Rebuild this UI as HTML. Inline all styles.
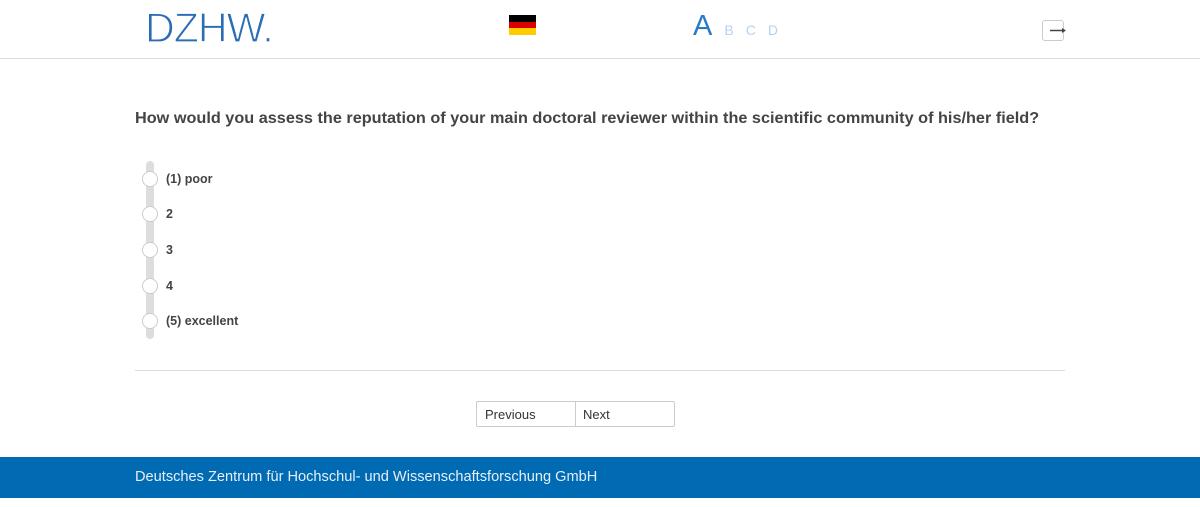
<!DOCTYPE html>
<html><head><meta charset="utf-8"><style>
body{margin:0;width:1200px;height:507px;background:#fff;font-family:"Liberation Sans",sans-serif;position:relative;overflow:hidden}
.hdr{position:absolute;left:0;top:0;width:1200px;height:58px;border-bottom:1px solid #ddd}
.logo{position:absolute;left:145px;top:4px;font-family:"Liberation Sans",sans-serif;font-size:42px;color:#2b6cb5;letter-spacing:-1px;-webkit-text-stroke:1.2px #fff;transform:scaleX(0.98);transform-origin:left}
.flag{position:absolute;left:509px;top:15px;width:27px;height:20px}
.flag div{height:33.4%}
.abc{position:absolute;left:693px;top:10px;color:#2a7bc6;font-family:"Liberation Sans",sans-serif}
.abc .a{font-size:29px}
.abc .o{font-size:14px;color:#b6d3ee;margin-left:12px}
.exit{position:absolute;left:1042px;top:20px;width:20px;height:19px;border:1px solid #ccc;border-radius:3px}
.q{position:absolute;left:135px;top:110px;font-size:16px;font-weight:bold;color:#444;white-space:nowrap;transform:scaleX(1.016);transform-origin:left}
.track{position:absolute;left:146px;top:161px;width:8px;height:178px;background:#ddd;border-radius:4px}
.opt{position:absolute;left:142px;height:16px}
.opt .c{position:absolute;left:0;top:0;width:14px;height:14px;border:1px solid #ccc;border-radius:50%;background:#fff}
.opt span{position:absolute;left:24px;top:1px;font-size:12.5px;font-weight:bold;color:#444;white-space:nowrap}
.hr{position:absolute;left:135px;top:370px;width:930px;border-top:1px solid #ddd}
.btns{position:absolute;left:476px;top:401px;width:197px;height:24px;border:1px solid #ccc;border-radius:2px;font-size:13px;color:#333}
.btns div{position:absolute;top:5px}
.ftr{position:absolute;left:0;top:457px;width:1200px;height:41px;background:#006ab3;color:#e6eff8;font-size:14.6px}
.ftr span{position:absolute;left:135px;top:12px}
</style></head><body>
<div class="hdr">
<div class="logo">DZHW.</div>
<div class="flag"><div style="background:#000"></div><div style="background:#d00"></div><div style="background:#fc0"></div></div>
<div class="abc"><span class="a">A</span><span class="o">B</span><span class="o">C</span><span class="o">D</span></div>
<div class="exit"><svg width="26" height="19" style="position:absolute;left:0;top:0;overflow:visible"><path d="M7 9.5H20" stroke="#444" stroke-width="1.5"/><path d="M19 7L23 9.5L19 12Z" fill="#444"/></svg></div>
</div>
<div class="q">How would you assess the reputation of your main doctoral reviewer within the scientific community of his/her field?</div>
<div class="track"></div>
<div class="opt" style="top:171px"><div class="c"></div><span>(1) poor</span></div>
<div class="opt" style="top:206px"><div class="c"></div><span>2</span></div>
<div class="opt" style="top:242px"><div class="c"></div><span>3</span></div>
<div class="opt" style="top:278px"><div class="c"></div><span>4</span></div>
<div class="opt" style="top:313px"><div class="c"></div><span>(5) excellent</span></div>
<div class="hr"></div>
<div class="btns"><div style="left:8px">Previous</div><div style="left:98px;top:0;height:24px;border-left:1px solid #ccc;width:0"></div><div style="left:106px">Next</div></div>
<div class="ftr"><span>Deutsches Zentrum für Hochschul- und Wissenschaftsforschung GmbH</span></div>
</body></html>
